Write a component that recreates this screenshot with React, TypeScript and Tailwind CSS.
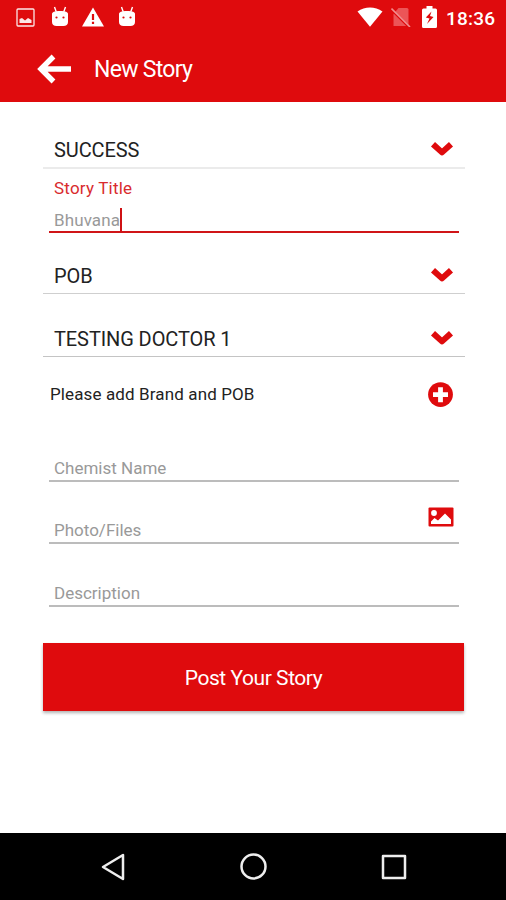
import type { ReactNode } from 'react';

const ChevronIcon = () => (
  <svg className="w-6 h-[18px]" viewBox="0 0 24 18" fill="none" stroke="#df0b0d" strokeWidth="6" strokeLinejoin="round">
    <path d="M3 4.2 12 12.4 21 4.2" />
  </svg>
);

const PlusIcon = () => (
  <svg className="w-[26px] h-[26px]" viewBox="0 0 26 26">
    <circle cx="13.5" cy="12.6" r="12.4" fill="#df0b0d" />
    <path d="M13.5 5.2v15M6 12.6h15" stroke="#fff" strokeWidth="4.8" />
  </svg>
);

const PhotoIcon = () => (
  <svg className="w-[26px] h-5" viewBox="0 0 26 20">
    <rect x="0.5" y="0.5" width="25" height="19" rx="1" fill="#df0b0d" />
    <circle cx="6" cy="6" r="2.9" fill="#fff" />
    <path d="M3 17v-2.5l3.5-3.5 3.5 2.5L17 6.5l6 6V17z" fill="#fff" />
  </svg>
);

const BackIcon = () => (
  <svg className="w-9 h-8" viewBox="0 0 36 32" fill="none" stroke="#fff" strokeWidth="5.4">
    <path d="M17.5 3.5 5 16l12.5 12.5M5 16h30" />
  </svg>
);

const RobotIcon = () => (
  <svg className="w-[18px] h-[21px]" viewBox="0 0 18 21">
    <path d="M3.5 1l1.8 5M14.5 1l-1.8 5" stroke="#fff" strokeWidth="1.4" />
    <path d="M1 8C1 6 3.5 5 9 5s8 1 8 3v8c0 2.5-1.8 4-4.5 4h-7C2.8 20 1 18.500 1 16z" fill="#fff" />
    <circle cx="5.5" cy="11.500" r="1.1" fill="#df0b0d" />
    <circle cx="12.500" cy="11.500" r="1.1" fill="#df0b0d" />
  </svg>
);

const StatusBar = () => (
  <div className="h-[34px] flex items-center justify-between pl-4 pr-[11px]">
    <div className="flex items-center">
      <svg className="w-[19px] h-[19px] opacity-90" viewBox="0 0 19 19">
        <rect x="1" y="1" width="17" height="17" rx="1" fill="none" stroke="#fff" strokeWidth="1.3" />
        <path d="M3.5 15v-4l2.5-1 3 2.5 3-2.5 3.500 2V15z" fill="#fff" />
      </svg>
      <div className="ml-4 -mt-0.5"><RobotIcon /></div>
      <svg className="ml-3 w-6 h-5" viewBox="0 0 24 20">
        <path d="M12 .5 23 19.500H1z" fill="#fff" />
        <path d="M12 7v6M12 14.8v2.2" stroke="#df0b0d" strokeWidth="2.2" />
      </svg>
      <div className="ml-[13px] -mt-0.5"><RobotIcon /></div>
    </div>
    <div className="flex items-center">
      <svg className="w-[26px] h-5" viewBox="0 0 26 20">
        <path d="M.5 4.5C8-.7 18-.7 25.5 4.5L13 19.8z" fill="#fff" />
      </svg>
      <svg className="ml-2 w-5 h-5" viewBox="0 0 20 20">
        <path d="M7.5 1H16a1.5 1.5 0 0 1 1.5 1.5V19h-15V7z" fill="#ec5557" />
        <path d="M1 3.2 18 20" stroke="#df0b0d" strokeWidth="2.6" />
        <path d="M.5 1.5 19 20" stroke="#f28f90" strokeWidth="1.6" />
      </svg>
      <svg className="ml-[11px] w-[15px] h-[22px]" viewBox="0 0 15 22">
        <path d="M4.5 0h6v2.5h3A1.5 1.5 0 0 1 15 4v16.5a1.5 1.5 0 0 1-1.5 1.5h-12A1.5 1.5 0 0 1 0 20.5V4a1.5 1.5 0 0 1 1.5-1.5h3z" fill="#fff" />
        <path d="M9.5 5.5 3.800 11.500l3.700 1-2.500 5.500 6.500-7-3.500-1z" fill="#df0b0d" />
      </svg>
      <span className="ml-[9px] mt-[3px] w-[49px] text-[19px] leading-6 font-medium text-white tracking-[0.2px] whitespace-nowrap">18:36</span>
    </div>
  </div>
);

const SelectRow = ({ label, className }: { label: string; className: string }) => (
  <div className={`-mx-1.5 flex items-end justify-between px-[11px] pb-[5px] ${className}`}>
    <span className="text-[20px] leading-6 text-[#222] tracking-[-0.1px]">{label}</span>
    <div className="mb-1"><ChevronIcon /></div>
  </div>
);

const InputRow = ({ label, className, icon }: { label: string; className: string; icon?: ReactNode }) => (
  <div className={`flex items-end justify-between px-[5px] border-b-2 border-[#bcbcbc] ${className}`}>
    <span className="text-[17px] leading-6 text-[#999]">{label}</span>
    {icon}
  </div>
);

export default function App() {
  return (
    <div className="h-[900px] w-[506px] flex flex-col bg-white overflow-hidden font-['Roboto','Liberation_Sans',sans-serif]">
      <header className="h-[102px] shrink-0 bg-[#df0b0d]">
        <StatusBar />
        <div className="h-[68px] flex items-center pl-9">
          <div className="mt-0.5"><BackIcon /></div>
          <h1 className="ml-[22px] mt-1 text-[23px] leading-7 text-white tracking-[-0.7px]">New Story</h1>
        </div>
      </header>

      <main className="flex-1 flex flex-col pl-[49px] pr-[47px]">
        <SelectRow label="SUCCESS" className="h-[67px] border-b-2 border-[#ebebeb]" />

        <div className="h-16 pt-[7px] px-[5px] border-b-2 border-[#d01518]">
          <div className="text-[17px] leading-6 text-[#d92b2e] tracking-[0.2px]">Story Title</div>
          <div className="mt-2 flex items-center">
            <span className="text-[17px] leading-6 text-[#999] tracking-[0.1px]">Bhuvana</span>
            <span className="w-0.5 h-6 bg-[#cf1114]" />
          </div>
        </div>

        <SelectRow label="POB" className="h-[61px] border-b border-[#cfcfcf]" />
        <SelectRow label="TESTING DOCTOR 1" className="h-[63px] border-b border-[#c4c4c4]" />

        <div className="h-[75px] flex items-center justify-between pl-px pr-1.5">
          <span className="-mt-0.5 text-[17px] leading-6 text-[#222] tracking-[0.12px]">Please add Brand and POB</span>
          <PlusIcon />
        </div>

        <InputRow label="Chemist Name" className="h-[50px]" />
        <InputRow label="Photo/Files" className="h-[62px]" icon={<div className="mb-[15px]"><PhotoIcon /></div>} />
        <InputRow label="Description" className="h-[63px]" />

        <button className="-ml-1.5 -mr-[5px] mt-9 h-[68px] bg-[#df0b0d] pt-[3px] text-[21px] text-white tracking-[-0.45px] shadow-[0_2px_3px_rgba(0,0,0,0.3)]">
          Post Your Story
        </button>
      </main>

      <nav className="h-[67px] shrink-0 bg-black flex items-center justify-between pl-[100px] pr-[98px]">
        <svg className="w-7 h-7" viewBox="0 0 28 28" fill="none" stroke="#eee" strokeWidth="2.5" strokeLinejoin="round">
          <path d="M23 2v24L3 14z" />
        </svg>
        <svg className="w-7 h-7" viewBox="0 0 28 28" fill="none" stroke="#eee" strokeWidth="2.5">
          <circle cx="13.5" cy="13.5" r="12" />
        </svg>
        <svg className="w-7 h-7" viewBox="0 0 28 28" fill="none" stroke="#eee" strokeWidth="2.5" strokeLinejoin="round">
          <rect x="3" y="3" width="22" height="22" />
        </svg>
      </nav>
    </div>
  );
}
